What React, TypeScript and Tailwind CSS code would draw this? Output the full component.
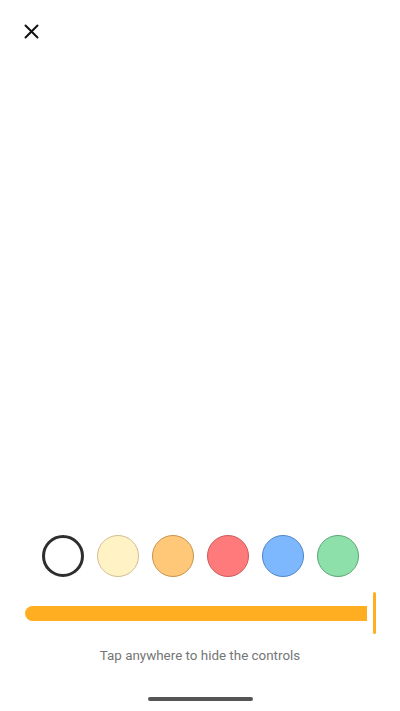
import React from "react";

const colors = [
  { fill: "bg-white", border: "border-[#2e2e2e] border-[3px]" },
  { fill: "bg-[#fff3c6]", border: "border-[#d2bf92] border" },
  { fill: "bg-[#ffc878]", border: "border-[#c8944a] border" },
  { fill: "bg-[#ff7a7a]", border: "border-[#c95c5c] border" },
  { fill: "bg-[#7db8ff]", border: "border-[#4c86c8] border" },
  { fill: "bg-[#8ee0aa]", border: "border-[#5ca676] border" },
];

export default function App() {
  return (
    <div
      className="h-[711px] w-full bg-white flex flex-col"
      style={{ fontFamily: "Roboto, 'Noto Sans', sans-serif" }}
    >
      {/* Close */}
      <div className="pt-[24px] pl-[24px]">
        <svg width="15" height="15" viewBox="0 0 15 15" className="block">
          <path d="M1.5 1.5 L13.5 13.5 M13.5 1.5 L1.5 13.5" stroke="#111" strokeWidth="2" strokeLinecap="round" />
        </svg>
      </div>

      <div className="flex-1" />

      {/* Colour swatches */}
      <div className="flex justify-center gap-[13px]">
        {colors.map((c, i) => (
          <div key={i} className={`w-[42px] h-[42px] rounded-full ${c.fill} ${c.border}`} />
        ))}
      </div>

      {/* Slider */}
      <div className="mt-[15px] h-[42px] flex items-center justify-center">
        <div className="w-[351px] flex items-center gap-[6px]">
          <div className="flex-1 h-[15px] bg-[#ffae22] rounded-l-full" />
          <div className="w-[3px] h-[42px] bg-[#ffae22] rounded-full" />
        </div>
      </div>

      {/* Hint */}
      <p className="mt-[12px] text-center text-[13.4px] leading-[20px] text-[#757575]">
        Tap anywhere to hide the controls
      </p>

      {/* Home indicator */}
      <div className="mt-[31px] pb-[10px] flex justify-center">
        <div className="w-[105px] h-[4px] rounded-full bg-[#555]" />
      </div>
    </div>
  );
}
